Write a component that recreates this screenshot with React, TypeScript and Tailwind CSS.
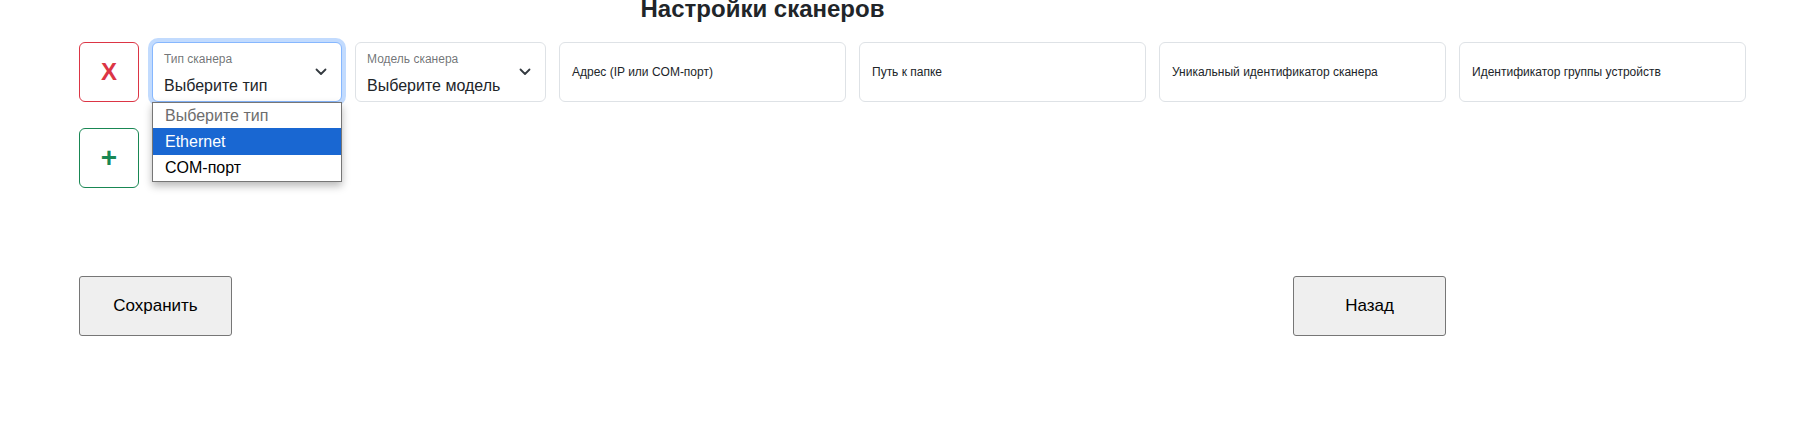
import React from "react";

function SelectField({
  label,
  value,
  focused,
  width,
  open,
}: {
  label: string;
  value: string;
  focused?: boolean;
  width: string;
  open?: boolean;
}) {
  return (
    <div
      className={
        "relative h-[60px] shrink-0 rounded-[6px] border bg-white " +
        width +
        (focused
          ? " border-[#86b7fe] shadow-[0_0_0_4px_rgba(13,110,253,0.25)] z-10"
          : " border-[#dee2e6]")
      }
    >
      <div className="flex flex-col pl-[11px] pt-[9px]">
        <span className="text-[12px] leading-[14px] text-[rgba(33,37,41,0.65)]">{label}</span>
        <span className="mt-[10px] text-[16px] leading-[20px] text-[#212529]">{value}</span>
      </div>
      <svg
        className="absolute right-[14px] top-[25px]"
        width="12"
        height="8"
        viewBox="0 0 12 8"
        fill="none"
      >
        <polyline
          points="1.5,1.5 6,6 10.5,1.5"
          stroke="#343a40"
          strokeWidth="1.8"
          strokeLinecap="round"
          strokeLinejoin="round"
        />
      </svg>
      {open && (
        <div className="absolute left-[-1px] right-[-1px] top-[59px] border border-[#767676] bg-white shadow-[0_4px_8px_rgba(0,0,0,0.28)] z-20">
          <div className="h-[25px] pl-[12px] text-[16px] leading-[26px] text-[#6d6d6d]">Выберите тип</div>
          <div className="h-[27px] pl-[12px] text-[16px] leading-[27px] bg-[#1967d2] text-white">Ethernet</div>
          <div className="h-[26px] pl-[12px] text-[16px] leading-[26px] text-black">COM-порт</div>
        </div>
      )}
    </div>
  );
}

function TextField({ label }: { label: string }) {
  return (
    <div className="h-[60px] w-[287px] shrink-0 rounded-[6px] border border-[#dee2e6] bg-white pl-[12px] pt-[22px]">
      <span className="block text-[12px] leading-[14px] text-[#212529]">{label}</span>
    </div>
  );
}

export default function App() {
  return (
    <div className="w-[1794px] h-[440px] overflow-hidden bg-white font-['Liberation_Sans',Arial,sans-serif]">
      <div className="ml-[79px] w-[1367px]">
        <h2 className="text-center text-[24px] leading-[18px] font-bold text-[#212529]">
          Настройки сканеров
        </h2>
        <div className="mt-[24px] flex flex-col gap-[26px]">
          <div className="flex w-max gap-[13px]">
            <button className="h-[60px] w-[60px] shrink-0 rounded-[6px] border border-[#dc3545] bg-white text-[24px] font-bold leading-none text-[#dc3545]">
              X
            </button>
            <SelectField label="Тип сканера" value="Выберите тип" focused open width="w-[190px]" />
            <SelectField label="Модель сканера" value="Выберите модель" width="w-[191px]" />
            <TextField label="Адрес (IP или COM-порт)" />
            <TextField label="Путь к папке" />
            <TextField label="Уникальный идентификатор сканера" />
            <TextField label="Идентификатор группы устройств" />
          </div>
          <div className="flex">
            <button className="h-[60px] w-[60px] rounded-[6px] border border-[#198754] bg-white text-[28px] font-bold leading-none text-[#198754]">
              +
            </button>
          </div>
        </div>
        <div className="mt-[88px] flex justify-between">
          <button className="h-[60px] w-[153px] rounded-[3px] border border-[#767676] bg-[#efefef] text-[17px] text-black">
            Сохранить
          </button>
          <button className="h-[60px] w-[153px] rounded-[3px] border border-[#767676] bg-[#efefef] text-[17px] text-black">
            Назад
          </button>
        </div>
      </div>
    </div>
  );
}
